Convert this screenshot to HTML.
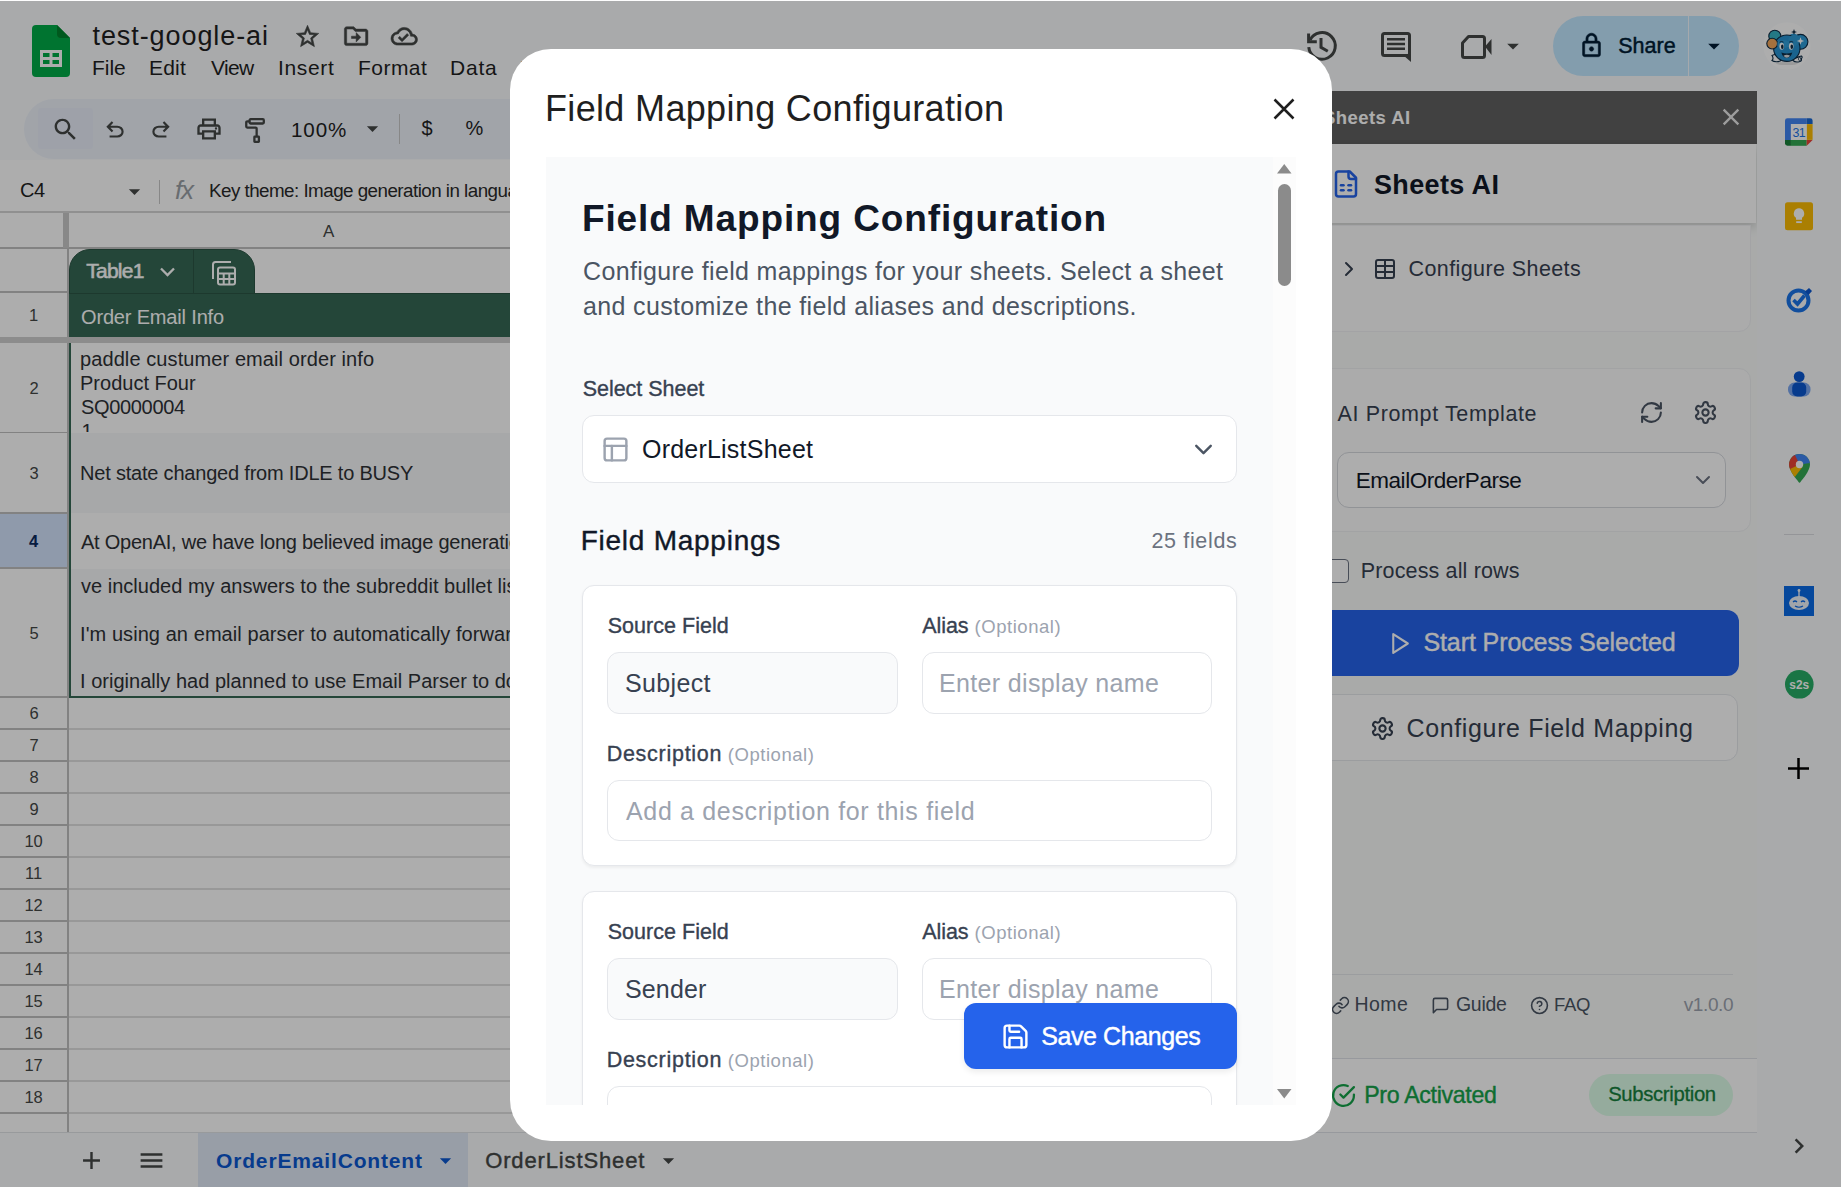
<!DOCTYPE html>
<html lang="en"><head><meta charset="utf-8"><title>Field Mapping Configuration - test-google-ai - Google Sheets</title>
<style>
html,body{margin:0;padding:0}
body{width:1841px;height:1187px;overflow:hidden;position:relative;background:#f9fbfd;font-family:"Liberation Sans",sans-serif;}
#app,#scrim{position:absolute;left:0;top:0;width:1841px;height:1187px;overflow:hidden}
#scrim{background:rgba(0,0,0,.32)}
.abs,.ic,.clip,.origin,.t{position:absolute}
.ic{display:block;overflow:visible}
.clip{overflow:hidden}
.origin{width:1841px;height:1187px}
.t{white-space:nowrap;line-height:1;margin:0;padding:0;font-family:"Liberation Sans",sans-serif;font-weight:400}
.dialog{background:#fff;border-radius:41px;overflow:hidden}
</style></head>
<body>
<div id="app"><svg class="ic" style="left:32px;top:25px;width:38px;height:52px" viewBox="0 0 38 52"><path d="M4 0h21l13 13v35a4 4 0 0 1-4 4H4a4 4 0 0 1-4-4V4a4 4 0 0 1 4-4z" fill="#00ac47"></path><path d="M25 0l13 13H29a4 4 0 0 1-4-4z" fill="#00832d"></path><path d="M8 25v17h22V25zm3 3h6.500v4H11zm9.500 0H27v4h-6.500zM11 35h6.500v4H11zm9.500 0H27v4h-6.500z" fill="#fff" fill-rule="evenodd"></path></svg><span class="t" style="font-size: 27px; color: rgb(31, 31, 31); font-weight: 400; left: 92.5px; top: 22.5px; letter-spacing: 0.916px;">test-google-ai</span><svg class="ic" style="left:294.25px;top:22.90px;width:27px;height:27px;" viewBox="0 0 24 24" fill="#444746" stroke="#444746" stroke-width="0.5" stroke-linejoin="round"><path d="M22 9.24l-7.19-.62L12 2 9.19 8.63 2 9.24l5.46 4.73L5.82 21 12 17.27 18.18 21l-1.63-7.03L22 9.24zM12 15.4l-3.76 2.27 1-4.28-3.32-2.88 4.38-.38L12 6.1l1.71 4.04 4.38.38-3.32 2.88 1 4.28L12 15.4z"></path></svg><svg class="ic" style="left:341.85px;top:21.85px;width:28.3px;height:28.3px;" viewBox="0 0 24 24" fill="#444746" stroke="#444746" stroke-width="0.4" stroke-linejoin="round"><path d="M20 6h-8l-2-2H4c-1.1 0-2 .9-2 2v12c0 1.1.9 2 2 2h16c1.1 0 2-.9 2-2V8c0-1.1-.9-2-2-2zm0 12H4V6h5.17l2 2H20v10zm-8-1l4-4-4-4v3H8v2h4v3z"></path></svg><svg class="ic" style="left:390.90px;top:22.75px;width:26.5px;height:26.5px;" viewBox="0 0 24 24" fill="#444746" stroke="#444746" stroke-width="0.5" stroke-linejoin="round"><path d="M19.35 10.04C18.67 6.59 15.64 4 12 4 9.11 4 6.6 5.64 5.35 8.04 2.34 8.36 0 10.91 0 14c0 3.31 2.69 6 6 6h13c2.76 0 5-2.24 5-5 0-2.64-2.05-4.78-4.65-4.96zM19 18H6c-2.21 0-4-1.79-4-4 0-2.05 1.53-3.76 3.56-3.97l1.07-.11.5-.95C8.08 7.14 9.94 6 12 6c2.62 0 4.88 1.86 5.39 4.43l.3 1.5 1.53.11c1.56.1 2.78 1.41 2.78 2.96 0 1.65-1.35 3-3 3zm-9-3.82l-2.09-2.09L6.5 13.5 10 17l6.01-6.01-1.41-1.41z"></path></svg><span class="t" style="font-size: 21px; color: rgb(31, 31, 31); font-weight: 400; left: 92px; top: 57px; letter-spacing: -0.053px;">File</span><span class="t" style="font-size: 21px; color: rgb(31, 31, 31); font-weight: 400; left: 149px; top: 57px; letter-spacing: 0.216px;">Edit</span><span class="t" style="font-size: 21px; color: rgb(31, 31, 31); font-weight: 400; left: 211px; top: 57px; letter-spacing: -0.657px;">View</span><span class="t" style="font-size: 21px; color: rgb(31, 31, 31); font-weight: 400; left: 278px; top: 57px; letter-spacing: 0.663px;">Insert</span><span class="t" style="font-size: 21px; color: rgb(31, 31, 31); font-weight: 400; left: 358px; top: 57px; letter-spacing: 0.466px;">Format</span><span class="t" style="font-size: 21px; color: rgb(31, 31, 31); font-weight: 400; left: 450px; top: 57px; letter-spacing: 0.774px;">Data</span><span class="t" style="font-size: 21px; color: rgb(31, 31, 31); font-weight: 400; left: 521px; top: 57px; letter-spacing: 0.369px;">Tools</span><span class="t" style="font-size: 21px; color: rgb(31, 31, 31); font-weight: 400; left: 594px; top: 57px; letter-spacing: 0.42px;">Extensions</span><span class="t" style="font-size: 21px; color: rgb(31, 31, 31); font-weight: 400; left: 723px; top: 57px; letter-spacing: 0.83px;">Help</span><svg class="ic" style="left:1305.700px;top:30px;width:32px;height:32px" viewBox="0 0 32 32" fill="none" stroke="#444746" stroke-width="3"><path d="M4 10.200A13.300 13.300 0 1 1 2.750 17.200"></path><path d="M2.600 3.500v8.200h8.200"></path><path d="M15 8v9.300l6.800 4"></path></svg><svg class="ic" style="left:1381px;top:32px;width:30px;height:30px" viewBox="0 0 30 30"><rect x="1.500" y="1.500" width="27" height="22" rx="2" fill="none" stroke="#444746" stroke-width="3"></rect><path d="M22 23l8 7v-8z" fill="#444746"></path><path d="M6 7.300h18M6 12h18M6 16.700h18" stroke="#444746" stroke-width="2.600"></path></svg><svg class="ic" style="left:1460.500px;top:35px;width:31px;height:24px" viewBox="0 0 31 24"><path d="M7.500 1.500H21.500a2 2 0 0 1 2 2V20.500a2 2 0 0 1-2 2H3.500a2 2 0 0 1-2-2V8z" fill="none" stroke="#444746" stroke-width="3" stroke-linejoin="round"></path><path d="M24 11.500l6.500-7.500v16z" fill="#444746"></path></svg><svg class="ic" style="left:1499.00px;top:32.00px;width:28px;height:28px;" viewBox="0 0 24 24" fill="#444746"><path d="M7 10l5 5 5-5z"></path></svg><div class="abs" style="left:1553px;top:16px;width:186.00px;height:60.00px;background:#c2e7ff;border-radius:30px"></div><div class="abs" style="left:1687.5px;top:16px;width:1.50px;height:60.00px;background:#f4faff"></div><svg class="ic" style="left:1577.70px;top:32.00px;width:27px;height:27px;" viewBox="0 0 24 24" fill="#001d35" stroke="#001d35" stroke-width="0.4" stroke-linejoin="round"><path d="M18 8h-1V6c0-2.76-2.24-5-5-5S7 3.240 7 6v2H6c-1.1 0-2 .9-2 2v10c0 1.1.9 2 2 2h12c1.1 0 2-.9 2-2V10c0-1.1-.9-2-2-2zM9 6c0-1.66 1.34-3 3-3s3 1.34 3 3v2H9V6zm9 14H6V10h12v10zm-6-3c1.1 0 2-.9 2-2s-.9-2-2-2-2 .9-2 2 .9 2 2 2z"></path></svg><span class="t" style="font-size: 21.5px; color: rgb(0, 29, 53); font-weight: 400; -webkit-text-stroke: 0.45px rgb(0, 29, 53); left: 1618.22px; top: 35.7px; letter-spacing: 0.034px;">Share</span><svg class="ic" style="left:1699.90px;top:32.20px;width:28px;height:28px;" viewBox="0 0 24 24" fill="#001d35"><path d="M7 10l5 5 5-5z"></path></svg><svg class="ic" style="left:1763px;top:22px;width:48px;height:48px" viewBox="0 0 48 48"><circle cx="24" cy="24" r="23.700" fill="#fff"></circle><ellipse cx="24" cy="41.500" rx="11" ry="1.600" fill="#e3e3e3"></ellipse><g stroke="#0d2b45" stroke-width="1.100"><path d="M9 33.500c2-1 5-1.500 7 .500l2 4.500c-3 2-7 1.500-9 0 1.500-1.500 1-3.500 0-5z" fill="#fff"></path><path d="M30 36c3 .500 6-1.500 8.500-2 1 .800.800 2.200-.500 2.800 1 .700.500 2.500-1 2.700-2.500.800-5.500.500-7-1z" fill="#fff"></path><circle cx="37.500" cy="19.800" r="7.400" fill="#2f9bd6"></circle><circle cx="30.500" cy="17" r="5.500" fill="#2f9bd6" stroke="none"></circle><circle cx="11.800" cy="14.200" r="6" fill="#35b3c4"></circle><circle cx="23.800" cy="26.200" r="13.200" fill="#2793d1"></circle><circle cx="9.200" cy="21.600" r="5.400" fill="#f2a75c"></circle></g><circle cx="30.800" cy="18.500" r="5.600" fill="#2f9bd6"></circle><ellipse cx="20.500" cy="22" rx="7" ry="4" fill="#3aa7e0" opacity=".600"></ellipse><ellipse cx="18.700" cy="24.300" rx="2.300" ry="3.500" fill="#fff"></ellipse><ellipse cx="28.200" cy="24.300" rx="2.300" ry="3.500" fill="#fff"></ellipse><ellipse cx="19.300" cy="24.800" rx="1.300" ry="2.200" fill="#0d2b45"></ellipse><ellipse cx="28.800" cy="24.800" rx="1.300" ry="2.200" fill="#0d2b45"></ellipse><path d="M16.500 20.200q2-1.500 4 0M26.200 20.200q2-1.500 4 0" stroke="#0d2b45" stroke-width=".900" fill="none"></path><path d="M18.300 30.500q5.500 2.200 11 0q-1.500 5.300-5.500 5.300t-5.500-5.300z" fill="#0d2b45"></path><path d="M20.500 33.700q3.300-1.700 6.600 0q-1.500 2-3.300 2t-3.300-2z" fill="#fff" opacity=".850"></path><path d="M37.500 15.300l1 2.700 2.700 1-2.700 1-1 2.700-1-2.700-2.700-1 2.700-1z" fill="#fff"></path><path d="M31 7l.800 2.200 2.200.800-2.200.800-.800 2.200-.800-2.200-2.200-.800 2.200-.800z" fill="#0d2b45"></path><circle cx="36.800" cy="37" r="1.500" fill="none" stroke="#0d2b45" stroke-width=".700"></circle></svg><div class="abs" style="left:24px;top:99px;width:1296.00px;height:60.00px;background:#edf2fa;border-radius:30px"></div><div class="abs" style="left:37.5px;top:107.5px;width:55.50px;height:41.00px;background:#e9eefa;border-radius:3px"></div><svg class="ic" style="left:51.00px;top:114.50px;width:29px;height:29px;" viewBox="0 0 24 24" fill="#444746"><path d="M15.5 14h-.79l-.28-.27C15.41 12.59 16 11.11 16 9.5 16 5.91 13.09 3 9.5 3S3 5.91 3 9.5 5.91 16 9.5 16c1.61 0 3.09-.59 4.23-1.57l.27.28v.79l5 4.99L20.49 19l-4.99-5zm-6 0C7.01 14 5 11.99 5 9.5S7.01 5 9.5 5 14 7.01 14 9.5 11.99 14 9.5 14z"></path></svg><svg class="ic" style="left:102.00px;top:117.00px;width:26px;height:26px;" viewBox="0 0 24 24" fill="#444746"><path d="M7 19v-2h7.1q1.575 0 2.738-1T18 13.5 16.838 11 14.1 10H7.8l2.6 2.600L9 14 4 9l5-5 1.400 1.400L7.800 8h6.300q2.425 0 4.163 1.575T20 13.500t-1.737 3.925T14.100 19z"></path></svg><svg class="ic" style="left:148.00px;top:117.00px;width:26px;height:26px;" viewBox="0 0 24 24" fill="#444746"><path d="M9.900 19q-2.425 0-4.163-1.575T4 13.500t1.737-3.925T9.900 8h6.300l-2.600-2.600L15 4l5 5-5 5-1.400-1.400 2.600-2.600H9.900q-1.575 0-2.738 1T6 13.500 7.162 16 9.900 17H17v2z"></path></svg><svg class="ic" style="left:195.00px;top:115.00px;width:28px;height:28px;" viewBox="0 0 24 24" fill="#444746"><path d="M19 8h-1V3H6v5H5c-1.66 0-3 1.34-3 3v6h4v4h12v-4h4v-6c0-1.66-1.34-3-3-3zM8 5h8v3H8V5zm8 14H8v-4h8v4zm2-4v-2H6v2H4v-4c0-.55.45-1 1-1h14c.55 0 1 .45 1 1v4h-2zM18 10.5a1 1 0 1 0 0 2 1 1 0 0 0 0-2z"></path></svg><svg class="ic" style="left:243.500px;top:116.500px;width:22px;height:27px" viewBox="0 0 22 27" fill="none" stroke="#444746" stroke-width="2.300" stroke-linejoin="round"><rect x="5.600" y="2.200" width="14.200" height="4.300" rx="1"></rect><path d="M5.600 4.300H3.250a1 1 0 0 0-1 1v4.250a1 1 0 0 0 1 1h8.400a1 1 0 0 1 1 1V19"></path><rect x="10.400" y="19.600" width="4.500" height="5.200" rx=".300" stroke-linejoin="miter"></rect></svg><span class="t" style="font-size: 20.6px; color: rgb(31, 31, 31); font-weight: 400; left: 291px; top: 120px; letter-spacing: 0.88px;">100%</span><svg class="ic" style="left:359.00px;top:114.50px;width:27px;height:27px;" viewBox="0 0 24 24" fill="#444746"><path d="M7 10l5 5 5-5z"></path></svg><div class="abs" style="left:398.5px;top:114px;width:1.50px;height:30.00px;background:#c7c7c7"></div><span class="t" style="font-size: 20px; color: rgb(31, 31, 31); font-weight: 400; left: 421.5px; top: 117.5px; letter-spacing: 0px;">$</span><span class="t" style="font-size: 20px; color: rgb(31, 31, 31); font-weight: 400; left: 465.5px; top: 117.5px; letter-spacing: 0px;">%</span><div class="abs" style="left:0px;top:159.5px;width:1320.00px;height:52.50px;background:#fff"></div><div class="abs" style="left:0px;top:211px;width:1320.00px;height:1.50px;background:#d5d5d5"></div><span class="t" style="font-size: 20px; color: rgb(31, 31, 31); font-weight: 400; left: 20px; top: 180px; letter-spacing: -0.443px;">C4</span><svg class="ic" style="left:120.50px;top:177.50px;width:27px;height:27px;" viewBox="0 0 24 24" fill="#444746"><path d="M7 10l5 5 5-5z"></path></svg><div class="abs" style="left:158.5px;top:180px;width:1.50px;height:24.00px;background:#c7c7c7"></div><span class="t" style="font-size: 26px; color: rgb(154, 160, 166); font-weight: 400; font-style: italic; left: 175px; top: 177px; letter-spacing: -1.224px;" liberation="" serif",serif;-webkit-text-stroke:0.5px="" #9aa0a6;"="">fx</span><span class="t" style="font-size: 18.8px; color: rgb(42, 42, 42); font-weight: 400; left: 209px; top: 182px; letter-spacing: -0.527px;">Key theme: Image generation in language models</span><div class="abs" style="left:0px;top:212.5px;width:1320.00px;height:919.50px;background:#fff"></div><div class="abs" style="left:69px;top:433px;width:1251.00px;height:80.00px;background:#f6f8f9"></div><div class="abs" style="left:69px;top:568.5px;width:1251.00px;height:127.50px;background:#f6f8f9"></div><div class="abs" style="left:0px;top:513.5px;width:67.00px;height:54.50px;background:#d3e3fd"></div><div class="abs" style="left:0px;top:247px;width:1320.00px;height:1.50px;background:#c0c0c0"></div><div class="abs" style="left:62.5px;top:212.5px;width:6.00px;height:35.50px;background:#c9c9c9"></div><div class="abs" style="left:67px;top:248px;width:1.50px;height:884.00px;background:#c0c0c0"></div><span class="t" style="font-size: 16.5px; color: rgb(68, 71, 70); font-weight: 400; left: 29px; top: 306.95px; letter-spacing: 0px;">1</span><div class="abs" style="left:0px;top:431.75px;width:67.00px;height:1.50px;background:#c0c0c0"></div><span class="t" style="font-size: 16.5px; color: rgb(68, 71, 70); font-weight: 400; left: 29.5px; top: 379.95px; letter-spacing: 0px;">2</span><div class="abs" style="left:0px;top:512.25px;width:67.00px;height:1.50px;background:#c0c0c0"></div><span class="t" style="font-size: 16.5px; color: rgb(68, 71, 70); font-weight: 400; left: 29.5px; top: 464.95px; letter-spacing: 0px;">3</span><div class="abs" style="left:0px;top:567.25px;width:67.00px;height:1.50px;background:#c0c0c0"></div><span class="t" style="font-size: 16.5px; color: rgb(11, 42, 94); font-weight: 700; left: 29px; top: 532.7px; letter-spacing: 0px;">4</span><div class="abs" style="left:0px;top:696.25px;width:67.00px;height:1.50px;background:#c0c0c0"></div><span class="t" style="font-size: 16.5px; color: rgb(68, 71, 70); font-weight: 400; left: 29.5px; top: 624.7px; letter-spacing: 0px;">5</span><div class="abs" style="left:0px;top:728.25px;width:67.00px;height:1.50px;background:#c0c0c0"></div><div class="abs" style="left:68.5px;top:728.25px;width:1251.50px;height:1.50px;background:#e1e1e1"></div><span class="t" style="font-size: 16.5px; color: rgb(68, 71, 70); font-weight: 400; left: 29.5px; top: 705.2px; letter-spacing: 0px;">6</span><div class="abs" style="left:0px;top:760.25px;width:67.00px;height:1.50px;background:#c0c0c0"></div><div class="abs" style="left:68.5px;top:760.25px;width:1251.50px;height:1.50px;background:#e1e1e1"></div><span class="t" style="font-size: 16.5px; color: rgb(68, 71, 70); font-weight: 400; left: 29.5px; top: 737.2px; letter-spacing: 0px;">7</span><div class="abs" style="left:0px;top:792.25px;width:67.00px;height:1.50px;background:#c0c0c0"></div><div class="abs" style="left:68.5px;top:792.25px;width:1251.50px;height:1.50px;background:#e1e1e1"></div><span class="t" style="font-size: 16.5px; color: rgb(68, 71, 70); font-weight: 400; left: 29.5px; top: 769.2px; letter-spacing: 0px;">8</span><div class="abs" style="left:0px;top:824.25px;width:67.00px;height:1.50px;background:#c0c0c0"></div><div class="abs" style="left:68.5px;top:824.25px;width:1251.50px;height:1.50px;background:#e1e1e1"></div><span class="t" style="font-size: 16.5px; color: rgb(68, 71, 70); font-weight: 400; left: 29.5px; top: 801.2px; letter-spacing: 0px;">9</span><div class="abs" style="left:0px;top:856.25px;width:67.00px;height:1.50px;background:#c0c0c0"></div><div class="abs" style="left:68.5px;top:856.25px;width:1251.50px;height:1.50px;background:#e1e1e1"></div><span class="t" style="font-size: 16.5px; color: rgb(68, 71, 70); font-weight: 400; left: 24.41px; top: 833.2px; letter-spacing: 0px;">10</span><div class="abs" style="left:0px;top:888.25px;width:67.00px;height:1.50px;background:#c0c0c0"></div><div class="abs" style="left:68.5px;top:888.25px;width:1251.50px;height:1.50px;background:#e1e1e1"></div><span class="t" style="font-size: 16.5px; color: rgb(68, 71, 70); font-weight: 400; left: 25.02px; top: 865.2px; letter-spacing: 0px;">11</span><div class="abs" style="left:0px;top:920.25px;width:67.00px;height:1.50px;background:#c0c0c0"></div><div class="abs" style="left:68.5px;top:920.25px;width:1251.50px;height:1.50px;background:#e1e1e1"></div><span class="t" style="font-size: 16.5px; color: rgb(68, 71, 70); font-weight: 400; left: 24.41px; top: 897.2px; letter-spacing: 0px;">12</span><div class="abs" style="left:0px;top:952.25px;width:67.00px;height:1.50px;background:#c0c0c0"></div><div class="abs" style="left:68.5px;top:952.25px;width:1251.50px;height:1.50px;background:#e1e1e1"></div><span class="t" style="font-size: 16.5px; color: rgb(68, 71, 70); font-weight: 400; left: 24.41px; top: 929.2px; letter-spacing: 0px;">13</span><div class="abs" style="left:0px;top:984.25px;width:67.00px;height:1.50px;background:#c0c0c0"></div><div class="abs" style="left:68.5px;top:984.25px;width:1251.50px;height:1.50px;background:#e1e1e1"></div><span class="t" style="font-size: 16.5px; color: rgb(68, 71, 70); font-weight: 400; left: 24.41px; top: 961.2px; letter-spacing: 0px;">14</span><div class="abs" style="left:0px;top:1016.25px;width:67.00px;height:1.50px;background:#c0c0c0"></div><div class="abs" style="left:68.5px;top:1016.25px;width:1251.50px;height:1.50px;background:#e1e1e1"></div><span class="t" style="font-size: 16.5px; color: rgb(68, 71, 70); font-weight: 400; left: 24.41px; top: 993.2px; letter-spacing: 0px;">15</span><div class="abs" style="left:0px;top:1048.25px;width:67.00px;height:1.50px;background:#c0c0c0"></div><div class="abs" style="left:68.5px;top:1048.25px;width:1251.50px;height:1.50px;background:#e1e1e1"></div><span class="t" style="font-size: 16.5px; color: rgb(68, 71, 70); font-weight: 400; left: 24.41px; top: 1025.2px; letter-spacing: 0px;">16</span><div class="abs" style="left:0px;top:1080.25px;width:67.00px;height:1.50px;background:#c0c0c0"></div><div class="abs" style="left:68.5px;top:1080.25px;width:1251.50px;height:1.50px;background:#e1e1e1"></div><span class="t" style="font-size: 16.5px; color: rgb(68, 71, 70); font-weight: 400; left: 24.41px; top: 1057.2px; letter-spacing: 0px;">17</span><div class="abs" style="left:0px;top:1112.25px;width:67.00px;height:1.50px;background:#c0c0c0"></div><div class="abs" style="left:68.5px;top:1112.25px;width:1251.50px;height:1.50px;background:#e1e1e1"></div><span class="t" style="font-size: 16.5px; color: rgb(68, 71, 70); font-weight: 400; left: 24.41px; top: 1089.2px; letter-spacing: 0px;">18</span><div class="abs" style="left:0px;top:291.25px;width:67.00px;height:1.50px;background:#c0c0c0"></div><div class="abs" style="left:0px;top:431.75px;width:67.00px;height:1.50px;background:#c0c0c0"></div><span class="t" style="font-size: 17px; color: rgb(68, 71, 70); font-weight: 400; left: 323px; top: 222.5px; letter-spacing: 0px;">A</span><div class="abs" style="left:69.25px;top:249px;width:186.00px;height:47.00px;background:#356854;border-radius:21px 21px 0 0;border:1px solid #2b5545;box-sizing:border-box"></div><div class="abs" style="left:69.25px;top:292.5px;width:1250.75px;height:44.50px;background:#356854;border-top:1px solid #2b5545;box-sizing:border-box"></div><div class="abs" style="left:192.5px;top:250px;width:1.50px;height:42.50px;background:#2b5545"></div><span class="t" style="font-size: 21px; color: rgb(255, 255, 255); font-weight: 400; -webkit-text-stroke: 0.55px rgb(255, 255, 255); left: 86.28px; top: 260px; letter-spacing: -0.751px;">Table1</span><svg class="ic" style="left:159px;top:266px;width:17px;height:12px" viewBox="0 0 17 12" fill="none" stroke="#fff" stroke-width="2.300"><path d="M2 2.500l6.500 6.500 6.500-6.500"></path></svg><svg class="ic" style="left:210.500px;top:259.500px;width:26px;height:26px" viewBox="0 0 26 26" fill="none" stroke="#fff" stroke-width="2"><path d="M2 19V4.500A2.500 2.500 0 0 1 4.500 2H20"></path><rect x="7" y="7.500" width="17" height="17" rx="2"></rect><path d="M7 13.500h17M7 19h17M12.700 13.500v11M18.300 13.500v11"></path></svg><span class="t" style="font-size: 20px; color: rgb(255, 255, 255); font-weight: 400; left: 81px; top: 307px; letter-spacing: -0.165px;">Order Email Info</span><div class="abs" style="left:0px;top:337px;width:1320.00px;height:6.00px;background:#cfcfcf"></div><div class="abs" style="left:68.75px;top:343px;width:1.75px;height:354.00px;background:#356854"></div><div class="abs" style="left:68.75px;top:695.5px;width:1251.25px;height:2.00px;background:#356854"></div><div class="clip" style="left:70px;top:343px;width:1250.00px;height:88.50px;"><div class="origin" style="left:-70px;top:-343px"><span class="t" style="font-size: 20px; color: rgb(46, 49, 54); font-weight: 400; left: 80px; top: 349.4px; letter-spacing: 0.092px;">paddle custumer email order info</span><span class="t" style="font-size: 20px; color: rgb(46, 49, 54); font-weight: 400; left: 80px; top: 373.4px; letter-spacing: 0.005px;">Product Four</span><span class="t" style="font-size: 20px; color: rgb(46, 49, 54); font-weight: 400; left: 81px; top: 397.4px; letter-spacing: -0.329px;">SQ0000004</span><span class="t" style="font-size: 20px; color: rgb(46, 49, 54); font-weight: 400; left: 81.5px; top: 421.4px; letter-spacing: 0px;">1</span></div></div><span class="t" style="font-size: 20px; color: rgb(46, 49, 54); font-weight: 400; left: 80px; top: 463px; letter-spacing: -0.201px;">Net state changed from IDLE to BUSY</span><span class="t" style="font-size: 20px; color: rgb(46, 49, 54); font-weight: 400; left: 81px; top: 532px; letter-spacing: -0.244px;">At OpenAI, we have long believed image generation should be</span><span class="t" style="font-size: 20px; color: rgb(46, 49, 54); font-weight: 400; left: 81px; top: 575.5px; letter-spacing: 0.016px;">ve included my answers to the subreddit bullet list below</span><span class="t" style="font-size: 20px; color: rgb(46, 49, 54); font-weight: 400; left: 80px; top: 623.5px; letter-spacing: 0.071px;">I'm using an email parser to automatically forward orders</span><span class="t" style="font-size: 20px; color: rgb(46, 49, 54); font-weight: 400; left: 80px; top: 671.3px; letter-spacing: 0.024px;">I originally had planned to use Email Parser to do this</span><div class="abs" style="left:0px;top:1132px;width:1757.00px;height:55.00px;background:#f9fbfd"></div><div class="abs" style="left:0px;top:1131.5px;width:1320.00px;height:1.50px;background:#e1e3e6"></div><svg class="ic" style="left:77.00px;top:1145.50px;width:29px;height:29px;" viewBox="0 0 24 24" fill="#444746"><path d="M19 13h-6v6h-2v-6H5v-2h6V5h2v6h6v2z"></path></svg><svg class="ic" style="left:136.50px;top:1145.50px;width:29px;height:29px;" viewBox="0 0 24 24" fill="#444746"><path d="M3 18h18v-2H3v2zm0-5h18v-2H3v2zm0-7v2h18V6H3z"></path></svg><div class="abs" style="left:198px;top:1133px;width:269.50px;height:54.00px;background:#e1e9f7"></div><span class="t" style="font-size: 21px; color: rgb(11, 87, 208); font-weight: 700; left: 216px; top: 1149.5px; letter-spacing: 0.842px;">OrderEmailContent</span><svg class="ic" style="left:431.50px;top:1146.50px;width:27px;height:27px;" viewBox="0 0 24 24" fill="#0b57d0"><path d="M7 10l5 5 5-5z"></path></svg><span class="t" style="font-size: 22px; color: rgb(68, 71, 70); font-weight: 400; -webkit-text-stroke: 0.4px rgb(68, 71, 70); left: 485.2px; top: 1149.5px; letter-spacing: 0.865px;">OrderListSheet</span><svg class="ic" style="left:654.50px;top:1146.50px;width:27px;height:27px;" viewBox="0 0 24 24" fill="#444746"><path d="M7 10l5 5 5-5z"></path></svg><div class="clip sidebar" style="left:1318px;top:91px;width:439.00px;height:1096.00px;"><div class="origin" style="left:-1318px;top:-91px"><div class="abs" style="left:1318px;top:91px;width:439.00px;height:1041.50px;background:#f9fbfa"></div><div class="abs" style="left:1318px;top:91px;width:439.00px;height:52.75px;background:#616161"></div><span class="t" style="font-size: 18.5px; color: rgb(255, 255, 255); font-weight: 700; left: 1323px; top: 109px; letter-spacing: 0.442px;">Sheets AI</span><svg class="ic" style="left:1716.50px;top:103.30px;width:28px;height:28px;" viewBox="0 0 24 24" fill="#e8e8e8"><path d="M19 6.41L17.59 5 12 10.59 6.41 5 5 6.41 10.59 12 5 17.59 6.41 19 12 13.41 17.59 19 19 17.59 13.41 12z"></path></svg><div class="abs" style="left:1318px;top:143.75px;width:438.00px;height:78.75px;background:#fff;box-shadow:0 4px 10px rgba(0,0,0,.18)"></div><svg class="ic" style="left:1330.60px;top:168.50px;width:30px;height:30px;" viewBox="0 0 24 24" fill="none" stroke="#2563eb" stroke-width="2" stroke-linecap="round" stroke-linejoin="round"><path d="M15 2H6a2 2 0 0 0-2 2v16a2 2 0 0 0 2 2h12a2 2 0 0 0 2-2V7Z"></path><path d="M14 2v4a2 2 0 0 0 2 2h4"></path><path d="M8 13h2"></path><path d="M14 13h2"></path><path d="M8 17h2"></path><path d="M14 17h2"></path></svg><span class="t" style="font-size: 27px; color: rgb(17, 24, 39); font-weight: 700; left: 1373.9px; top: 171.6px; letter-spacing: 0.382px;">Sheets AI</span><div class="abs" style="left:1318px;top:224.5px;width:433.00px;height:107.50px;background:#fcfcfd;border:1px solid #f0f1f3;border-radius:0 0 12px 12px;box-sizing:border-box"></div><svg class="ic" style="left:1336.50px;top:257.25px;width:24px;height:24px;" viewBox="0 0 24 24" fill="none" stroke="#374151" stroke-width="2" stroke-linecap="round" stroke-linejoin="round"><path d="m9 18 6-6-6-6"></path></svg><svg class="ic" style="left:1373.00px;top:257.00px;width:24px;height:24px;" viewBox="0 0 24 24" fill="none" stroke="#374151" stroke-width="2" stroke-linecap="round" stroke-linejoin="round"><path d="M12 3v18"></path><rect x="3" y="3" width="18" height="18" rx="2"></rect><path d="M3 9h18"></path><path d="M3 15h18"></path></svg><span class="t" style="font-size: 21.5px; color: rgb(55, 65, 81); font-weight: 400; left: 1408.5px; top: 259px; letter-spacing: 0.408px;">Configure Sheets</span><div class="abs" style="left:1318px;top:368px;width:432.50px;height:164.00px;background:#fcfcfd;border:1px solid #eff0f2;border-radius:12px;box-sizing:border-box"></div><span class="t" style="font-size: 21.5px; color: rgb(55, 65, 81); font-weight: 400; left: 1337.5px; top: 403.5px; letter-spacing: 0.627px;">AI Prompt Template</span><svg class="ic" style="left:1639.25px;top:400.00px;width:25px;height:25px;" viewBox="0 0 24 24" fill="none" stroke="#4b5563" stroke-width="2" stroke-linecap="round" stroke-linejoin="round"><path d="M3 12a9 9 0 0 1 9-9 9.75 9.75 0 0 1 6.740 2.740L21 8"></path><path d="M21 3v5h-5"></path><path d="M21 12a9 9 0 0 1-9 9 9.75 9.75 0 0 1-6.740-2.740L3 16"></path><path d="M8 16H3v5"></path></svg><svg class="ic" style="left:1693.00px;top:400.00px;width:25px;height:25px;" viewBox="0 0 24 24" fill="none" stroke="#4b5563" stroke-width="2" stroke-linecap="round" stroke-linejoin="round"><path d="M12.220 2h-.440a2 2 0 0 0-2 2v.180a2 2 0 0 1-1 1.730l-.430.250a2 2 0 0 1-2 0l-.150-.080a2 2 0 0 0-2.730.730l-.220.380a2 2 0 0 0 .730 2.730l.150.100a2 2 0 0 1 1 1.720v.510a2 2 0 0 1-1 1.740l-.150.090a2 2 0 0 0-.730 2.730l.220.380a2 2 0 0 0 2.730.730l.150-.080a2 2 0 0 1 2 0l.430.250a2 2 0 0 1 1 1.730V20a2 2 0 0 0 2 2h.440a2 2 0 0 0 2-2v-.180a2 2 0 0 1 1-1.730l.430-.250a2 2 0 0 1 2 0l.150.080a2 2 0 0 0 2.730-.730l.220-.390a2 2 0 0 0-.730-2.730l-.150-.080a2 2 0 0 1-1-1.740v-.500a2 2 0 0 1 1-1.740l.150-.090a2 2 0 0 0 .730-2.730l-.220-.380a2 2 0 0 0-2.730-.730l-.150.080a2 2 0 0 1-2 0l-.430-.250a2 2 0 0 1-1-1.730V4a2 2 0 0 0-2-2z"></path><circle cx="12" cy="12" r="3"></circle></svg><div class="abs" style="left:1337px;top:452px;width:389.25px;height:55.50px;background:#fff;border:1.500px solid #d6d9de;border-radius:12px;box-sizing:border-box"></div><span class="t" style="font-size: 22.5px; color: rgb(17, 24, 39); font-weight: 400; left: 1355.75px; top: 470px; letter-spacing: -0.467px;">EmailOrderParse</span><svg class="ic" style="left:1690.50px;top:468.00px;width:24px;height:24px;" viewBox="0 0 24 24" fill="none" stroke="#6b7280" stroke-width="2" stroke-linecap="round" stroke-linejoin="round"><path d="m6 9 6 6 6-6"></path></svg><div class="abs" style="left:1325px;top:559px;width:23.75px;height:23.50px;background:#fff;border:1.500px solid #6b7280;border-radius:4px;box-sizing:border-box"></div><span class="t" style="font-size: 21.5px; color: rgb(55, 65, 81); font-weight: 400; left: 1360.75px; top: 561.25px; letter-spacing: 0.149px;">Process all rows</span><div class="abs" style="left:1318px;top:610px;width:420.75px;height:65.50px;background:#2563eb;border-radius:12px"></div><svg class="ic" style="left:1387.00px;top:630.50px;width:25px;height:25px;" viewBox="0 0 24 24" fill="none" stroke="#fff" stroke-width="2" stroke-linecap="round" stroke-linejoin="round"><polygon points="6 3 20 12 6 21 6 3"></polygon></svg><span class="t" style="font-size: 25px; color: rgb(255, 255, 255); font-weight: 400; -webkit-text-stroke: 0.4px rgb(255, 255, 255); left: 1423.45px; top: 630.25px; letter-spacing: -0.097px;">Start Process Selected</span><div class="abs" style="left:1318px;top:694.25px;width:420.00px;height:67.00px;background:#fff;border:1.500px solid #e5e7eb;border-radius:12px;box-sizing:border-box"></div><svg class="ic" style="left:1370.00px;top:715.50px;width:25px;height:25px;" viewBox="0 0 24 24" fill="none" stroke="#374151" stroke-width="2" stroke-linecap="round" stroke-linejoin="round"><path d="M12.220 2h-.440a2 2 0 0 0-2 2v.180a2 2 0 0 1-1 1.730l-.430.250a2 2 0 0 1-2 0l-.150-.080a2 2 0 0 0-2.730.730l-.220.380a2 2 0 0 0 .730 2.730l.150.100a2 2 0 0 1 1 1.720v.510a2 2 0 0 1-1 1.740l-.150.090a2 2 0 0 0-.730 2.730l.220.380a2 2 0 0 0 2.730.730l.150-.080a2 2 0 0 1 2 0l.430.250a2 2 0 0 1 1 1.730V20a2 2 0 0 0 2 2h.440a2 2 0 0 0 2-2v-.180a2 2 0 0 1 1-1.730l.430-.250a2 2 0 0 1 2 0l.150.080a2 2 0 0 0 2.730-.730l.220-.390a2 2 0 0 0-.730-2.730l-.150-.080a2 2 0 0 1-1-1.740v-.500a2 2 0 0 1 1-1.740l.150-.090a2 2 0 0 0 .730-2.730l-.220-.380a2 2 0 0 0-2.730-.730l-.150.080a2 2 0 0 1-2 0l-.430-.250a2 2 0 0 1-1-1.730V4a2 2 0 0 0-2-2z"></path><circle cx="12" cy="12" r="3"></circle></svg><span class="t" style="font-size: 25px; color: rgb(55, 65, 81); font-weight: 400; left: 1406.5px; top: 716px; letter-spacing: 0.638px;">Configure Field Mapping</span><div class="abs" style="left:1318px;top:973.5px;width:415.00px;height:1.50px;background:#e5e7eb"></div><svg class="ic" style="left:1330.50px;top:995.50px;width:19px;height:19px;" viewBox="0 0 24 24" fill="none" stroke="#4b5563" stroke-width="2" stroke-linecap="round" stroke-linejoin="round"><path d="M10 13a5 5 0 0 0 7.540.540l3-3a5 5 0 0 0-7.070-7.070l-1.720 1.710"></path><path d="M14 11a5 5 0 0 0-7.540-.540l-3 3a5 5 0 0 0 7.070 7.070l1.710-1.710"></path></svg><span class="t" style="font-size: 19.5px; color: rgb(75, 85, 99); font-weight: 400; left: 1354.5px; top: 995.25px; letter-spacing: 0.443px;">Home</span><svg class="ic" style="left:1430.50px;top:996.00px;width:19px;height:19px;" viewBox="0 0 24 24" fill="none" stroke="#4b5563" stroke-width="2" stroke-linecap="round" stroke-linejoin="round"><path d="M21 15a2 2 0 0 1-2 2H7l-4 4V5a2 2 0 0 1 2-2h14a2 2 0 0 1 2 2z"></path></svg><span class="t" style="font-size: 19.5px; color: rgb(75, 85, 99); font-weight: 400; left: 1456px; top: 995.25px; letter-spacing: -0.297px;">Guide</span><svg class="ic" style="left:1529.50px;top:995.50px;width:19px;height:19px;" viewBox="0 0 24 24" fill="none" stroke="#4b5563" stroke-width="2" stroke-linecap="round" stroke-linejoin="round"><circle cx="12" cy="12" r="10"></circle><path d="M9.090 9a3 3 0 0 1 5.830 1c0 2-3 3-3 3"></path><path d="M12 17h.01"></path></svg><span class="t" style="font-size: 18.5px; color: rgb(75, 85, 99); font-weight: 400; left: 1554px; top: 996.25px; letter-spacing: -0.31px;">FAQ</span><span class="t" style="font-size: 19px; color: rgb(156, 163, 175); font-weight: 400; left: 1683.75px; top: 995.25px; letter-spacing: -0.388px;">v1.0.0</span><div class="abs" style="left:1318px;top:1058px;width:439.00px;height:74.50px;background:#fff;border-top:1.500px solid #dfe2e7;border-bottom:1.500px solid #dfe2e7;box-sizing:border-box"></div><svg class="ic" style="left:1330.50px;top:1082.50px;width:25px;height:25px;" viewBox="0 0 24 24" fill="none" stroke="#16a34a" stroke-width="2.2" stroke-linecap="round" stroke-linejoin="round"><path d="M22 11.080V12a10 10 0 1 1-5.930-9.140"></path><path d="m9 11 3 3L22 4"></path></svg><span class="t" style="font-size: 23.2px; color: rgb(22, 163, 74); font-weight: 400; -webkit-text-stroke: 0.4px rgb(22, 163, 74); left: 1364.2px; top: 1083.5px; letter-spacing: -0.326px;">Pro Activated</span><div class="abs" style="left:1589.25px;top:1074.25px;width:143.75px;height:41.50px;background:#dcfce7;border-radius:21px"></div><span class="t" style="font-size: 20.3px; color: rgb(21, 128, 61); font-weight: 400; -webkit-text-stroke: 0.3px rgb(21, 128, 61); left: 1608.15px; top: 1083.75px; letter-spacing: -0.33px;">Subscription</span></div></div><div class="abs" style="left:1757px;top:91px;width:84.00px;height:1096.00px;background:#f9fbfd"></div><svg class="ic" style="left:1784.800px;top:118px;width:27.600px;height:28px" viewBox="0 0 28 28"><path d="M2.500 0H22v6H6v16H0V2.500A2.500 2.500 0 0 1 2.500 0z" fill="#4285f4"></path><path d="M22 0h3.500A2.500 2.500 0 0 1 28 2.500V6h-6z" fill="#1967d2"></path><rect x="22" y="6" width="6" height="16" fill="#fbbc04"></rect><rect x="6" y="22" width="16" height="6" fill="#34a853"></rect><path d="M0 22h6v6H2.500A2.500 2.500 0 0 1 0 25.500z" fill="#188038"></path><path d="M22 22h6l-6 6z" fill="#ea4335"></path><rect x="6" y="6" width="16" height="16" fill="#fff"></rect><text x="14" y="18.600" font-family="Liberation Sans, sans-serif" font-size="12.600" text-anchor="middle" fill="#1a73e8" letter-spacing="-.500">31</text></svg><svg class="ic" style="left:1785px;top:201.600px;width:28px;height:28.500px" viewBox="0 0 28 28"><rect width="28" height="28" rx="2.500" fill="#fbbc04"></rect><path d="M14 6a5.200 5.200 0 0 0-3 9.450V17.500h6v-2.050A5.200 5.200 0 0 0 14 6z" fill="#fff"></path><rect x="11.200" y="19" width="5.600" height="1.800" fill="#fff"></rect></svg><svg class="ic" style="left:1785px;top:285px;width:29px;height:29px" viewBox="0 0 29 29"><circle cx="13.500" cy="15.500" r="10" fill="none" stroke="#1a73e8" stroke-width="4"></circle><path d="M8.500 15l4 4 7-8.500" fill="none" stroke="#1a73e8" stroke-width="3.600"></path><path d="M20 6.500l4-3.500 3 3-3.500 4z" fill="#0b57d0"></path></svg><svg class="ic" style="left:1788px;top:371px;width:22.500px;height:26px" viewBox="0 0 22.500 26"><circle cx="11.200" cy="5.600" r="5.400" fill="#0b57d0"></circle><rect x="0" y="11.500" width="22.500" height="14" rx="6.500" fill="#7ba7f0"></rect><rect x="4.200" y="11.500" width="14" height="14" rx="5" fill="#0b57d0"></rect></svg><svg class="ic" style="left:1788.500px;top:453.500px;width:21px;height:29px" viewBox="0 0 21 29"><defs><clipPath id="pin"><path d="M10.500 0C4.700 0 0 4.700 0 10.500c0 7 10.500 18.500 10.500 18.500S21 17.500 21 10.500C21 4.700 16.300 0 10.500 0z"></path></clipPath></defs><g clip-path="url(#pin)"><rect width="21" height="29" fill="#34a853"></rect><path d="M0 0h21v9L10.500 10.500 3 2z" fill="#4285f4"></path><path d="M0 0h5.500l5 10.500L0 17z" fill="#ea4335"></path><path d="M0 15.500l10.500-5 3 2.500L5 24 0 22z" fill="#fbbc04"></path></g><circle cx="10.500" cy="10.500" r="3.700" fill="#fff"></circle></svg><div class="abs" style="left:1783.7px;top:533.75px;width:30.30px;height:1.50px;background:#dadce0"></div><svg class="ic" style="left:1784px;top:586px;width:30px;height:30px" viewBox="0 0 30 30"><rect width="30" height="30" fill="#0a6ae6"></rect><ellipse cx="15" cy="17" rx="10" ry="7" fill="#eef3fb"></ellipse><rect x="14.300" y="4" width="1.400" height="7" fill="#eef3fb"></rect><circle cx="15" cy="4.500" r="1.400" fill="#eef3fb"></circle><path d="M9 16q2-2 4 0M17 16q2-2 4 0" stroke="#0a6ae6" stroke-width="1.200" fill="none"></path><path d="M11 20q4 2.500 8 0" stroke="#0a6ae6" stroke-width="1.200" fill="none"></path></svg><svg class="ic" style="left:1784.700px;top:670.300px;width:28.600px;height:28.600px" viewBox="0 0 30 30"><circle cx="15" cy="15" r="15" fill="#27ad66"></circle><text x="15" y="19.500" font-family="Liberation Sans, sans-serif" font-size="12.500" font-weight="700" text-anchor="middle" fill="#fff">s2s</text></svg><svg class="ic" style="left:1788.400px;top:757.500px;width:21px;height:21px" viewBox="0 0 21 21" stroke="#000" stroke-width="2.500"><path d="M10.500 0v21M0 10.500h21"></path></svg><svg class="ic" style="left:1784.00px;top:1131.00px;width:30px;height:30px;" viewBox="0 0 24 24" fill="#444746"><path d="M10 6L8.59 7.41 13.17 12l-4.58 4.59L10 18l6-6z"></path></svg></div>
<div id="scrim"></div>
<div class="abs" style="left:0;top:0;width:1841px;height:1px;background:#fdfdfd"></div>
<div class="abs dialog" role="dialog" aria-modal="true" aria-label="Field Mapping Configuration" style="left:510px;top:48.75px;width:821.50px;height:1091.75px;"><div class="origin" style="left:-510px;top:-48.750px"><span class="t" style="font-size: 36px; color: rgb(31, 31, 31); font-weight: 400; left: 545px; top: 90.75px; letter-spacing: 0.337px;">Field Mapping Configuration</span><svg class="ic" style="left:1271.500px;top:97px;width:24px;height:24px" viewBox="0 0 24 24" fill="none" stroke="#1f1f1f" stroke-width="2.500"><path d="M2.500 2.500l19 19M21.500 2.500l-19 19"></path></svg><div class="clip frame" style="left:546px;top:157px;width:749.50px;height:947.50px;background:#f9fafb"><div class="origin" style="left:-546px;top:-157px"><h1 class="t" style="font-size: 37px; color: rgb(17, 24, 39); font-weight: 700; left: 582px; top: 199.5px; letter-spacing: 0.87px;">Field Mapping Configuration</h1><span class="t" style="font-size: 25px; color: rgb(75, 85, 99); font-weight: 400; left: 583px; top: 258.5px; letter-spacing: 0.341px;">Configure field mappings for your sheets. Select a sheet</span><span class="t" style="font-size: 25px; color: rgb(75, 85, 99); font-weight: 400; left: 583px; top: 294px; letter-spacing: 0.355px;">and customize the field aliases and descriptions.</span><span class="t" style="font-size: 21.5px; color: rgb(55, 65, 81); font-weight: 400; -webkit-text-stroke: 0.35px rgb(55, 65, 81); left: 582.67px; top: 378.5px; letter-spacing: -0.026px;">Select Sheet</span><div class="abs" style="left:582px;top:415px;width:654.50px;height:67.50px;background:#fff;border:1.500px solid #e5e7eb;border-radius:12px;box-sizing:border-box"></div><svg class="ic" style="left:600.50px;top:434.50px;width:29px;height:29px;" viewBox="0 0 24 24" fill="none" stroke="#9ca3af" stroke-width="2" stroke-linecap="round" stroke-linejoin="round"><rect x="3" y="3" width="18" height="18" rx="2"></rect><path d="M3 9h18"></path><path d="M9 21V9"></path></svg><span class="t" style="font-size: 25px; color: rgb(17, 24, 39); font-weight: 400; left: 642px; top: 436.5px; letter-spacing: 0.216px;">OrderListSheet</span><svg class="ic" style="left:1189.00px;top:434.50px;width:29px;height:29px;" viewBox="0 0 24 24" fill="none" stroke="#4b5563" stroke-width="2" stroke-linecap="round" stroke-linejoin="round"><path d="m6 9 6 6 6-6"></path></svg><h2 class="t" style="font-size: 28px; color: rgb(17, 24, 39); font-weight: 400; -webkit-text-stroke: 0.4px rgb(17, 24, 39); left: 580.7px; top: 526.5px; letter-spacing: 0.748px;">Field Mappings</h2><span class="t" style="font-size: 21.5px; color: rgb(107, 114, 128); font-weight: 400; left: 1151.5px; top: 530.5px; letter-spacing: 0.646px;">25 fields</span><div class="abs card" style="left:582px;top:585px;width:654.50px;height:281.00px;background:#fff;border:1.500px solid #e5e7eb;border-radius:12px;box-sizing:border-box;box-shadow:0 1.500px 3px rgba(0,0,0,.05)"></div><span class="t" style="font-size: 21.5px; color: rgb(55, 65, 81); font-weight: 400; -webkit-text-stroke: 0.35px rgb(55, 65, 81); left: 607.67px; top: 616px; letter-spacing: 0.037px;">Source Field</span><span class="t" style="font-size: 21.5px; color: rgb(55, 65, 81); font-weight: 400; -webkit-text-stroke: 0.35px rgb(55, 65, 81); left: 922.17px; top: 616px; letter-spacing: -0.05px;">Alias</span><span class="t" style="font-size: 18.5px; color: rgb(156, 163, 175); font-weight: 400; left: 974.5px; top: 618px; letter-spacing: 0.548px;">(Optional)</span><div class="abs" style="left:607px;top:652px;width:290.50px;height:61.75px;background:#f9fafb;border:1.500px solid #e5e7eb;border-radius:12px;box-sizing:border-box"></div><span class="t" style="font-size: 25px; color: rgb(55, 65, 81); font-weight: 400; left: 625px; top: 670.75px; letter-spacing: 0.343px;">Subject</span><div class="abs" style="left:921.5px;top:652px;width:290.25px;height:61.75px;background:#fff;border:1.500px solid #e5e7eb;border-radius:12px;box-sizing:border-box"></div><span class="t" style="font-size: 25px; color: rgb(156, 163, 175); font-weight: 400; left: 939px; top: 670.75px; letter-spacing: 0.347px;">Enter display name</span><span class="t" style="font-size: 21.5px; color: rgb(55, 65, 81); font-weight: 400; -webkit-text-stroke: 0.35px rgb(55, 65, 81); left: 606.67px; top: 743.5px; letter-spacing: 0.732px;">Description</span><span class="t" style="font-size: 18.5px; color: rgb(156, 163, 175); font-weight: 400; left: 727.75px; top: 745.5px; letter-spacing: 0.548px;">(Optional)</span><div class="abs" style="left:607px;top:780px;width:604.75px;height:61.25px;background:#fff;border:1.500px solid #e5e7eb;border-radius:12px;box-sizing:border-box"></div><span class="t" style="font-size: 25px; color: rgb(156, 163, 175); font-weight: 400; left: 626px; top: 798.5px; letter-spacing: 0.668px;">Add a description for this field</span><div class="abs card" style="left:582px;top:891px;width:654.50px;height:281.00px;background:#fff;border:1.500px solid #e5e7eb;border-radius:12px;box-sizing:border-box;box-shadow:0 1.500px 3px rgba(0,0,0,.05)"></div><span class="t" style="font-size: 21.5px; color: rgb(55, 65, 81); font-weight: 400; -webkit-text-stroke: 0.35px rgb(55, 65, 81); left: 607.67px; top: 922px; letter-spacing: 0.037px;">Source Field</span><span class="t" style="font-size: 21.5px; color: rgb(55, 65, 81); font-weight: 400; -webkit-text-stroke: 0.35px rgb(55, 65, 81); left: 922.17px; top: 922px; letter-spacing: -0.05px;">Alias</span><span class="t" style="font-size: 18.5px; color: rgb(156, 163, 175); font-weight: 400; left: 974.5px; top: 924px; letter-spacing: 0.548px;">(Optional)</span><div class="abs" style="left:607px;top:958px;width:290.50px;height:61.75px;background:#f9fafb;border:1.500px solid #e5e7eb;border-radius:12px;box-sizing:border-box"></div><span class="t" style="font-size: 25px; color: rgb(55, 65, 81); font-weight: 400; left: 625px; top: 976.75px; letter-spacing: 0.142px;">Sender</span><div class="abs" style="left:921.5px;top:958px;width:290.25px;height:61.75px;background:#fff;border:1.500px solid #e5e7eb;border-radius:12px;box-sizing:border-box"></div><span class="t" style="font-size: 25px; color: rgb(156, 163, 175); font-weight: 400; left: 939px; top: 976.75px; letter-spacing: 0.347px;">Enter display name</span><span class="t" style="font-size: 21.5px; color: rgb(55, 65, 81); font-weight: 400; -webkit-text-stroke: 0.35px rgb(55, 65, 81); left: 606.67px; top: 1049.5px; letter-spacing: 0.732px;">Description</span><span class="t" style="font-size: 18.5px; color: rgb(156, 163, 175); font-weight: 400; left: 727.75px; top: 1051.5px; letter-spacing: 0.548px;">(Optional)</span><div class="abs" style="left:607px;top:1086px;width:604.75px;height:61.25px;background:#fff;border:1.500px solid #e5e7eb;border-radius:12px;box-sizing:border-box"></div><span class="t" style="font-size: 25px; color: rgb(156, 163, 175); font-weight: 400; left: 626px; top: 1104.5px; letter-spacing: 0.668px;">Add a description for this field</span><div class="abs" style="left:964px;top:1003px;width:272.75px;height:65.75px;background:#2563eb;border-radius:12px;box-shadow:0 3px 6px rgba(0,0,0,.08)"></div><svg class="ic" style="left:1000.50px;top:1021.50px;width:29px;height:29px;" viewBox="0 0 24 24" fill="none" stroke="#fff" stroke-width="2" stroke-linecap="round" stroke-linejoin="round"><path d="M15.200 3a2 2 0 0 1 1.400.600l3.800 3.800a2 2 0 0 1 .600 1.400V19a2 2 0 0 1-2 2H5a2 2 0 0 1-2-2V5a2 2 0 0 1 2-2z"></path><path d="M17 21v-7a1 1 0 0 0-1-1H8a1 1 0 0 0-1 1v7"></path><path d="M7 3v4a1 1 0 0 0 1 1h7"></path></svg><span class="t" style="font-size: 25px; color: rgb(255, 255, 255); font-weight: 400; -webkit-text-stroke: 0.45px rgb(255, 255, 255); left: 1041.22px; top: 1024px; letter-spacing: -0.405px;">Save Changes</span><div class="abs" style="left:1272.5px;top:157px;width:23.00px;height:947.50px;background:#fcfcfc"></div><svg class="ic" style="left:1277px;top:164px;width:14.500px;height:9.500px" viewBox="0 0 14 9"><path d="M7 0l7 9H0z" fill="#8b8b8b"></path></svg><svg class="ic" style="left:1277px;top:1089px;width:14.500px;height:9.500px" viewBox="0 0 14 9"><path d="M0 0h14l-7 9z" fill="#8b8b8b"></path></svg><div class="abs" style="left:1277.5px;top:184px;width:13.00px;height:101.75px;background:#8b8b8b;border-radius:6.500px"></div></div></div></div></div>

</body></html>
